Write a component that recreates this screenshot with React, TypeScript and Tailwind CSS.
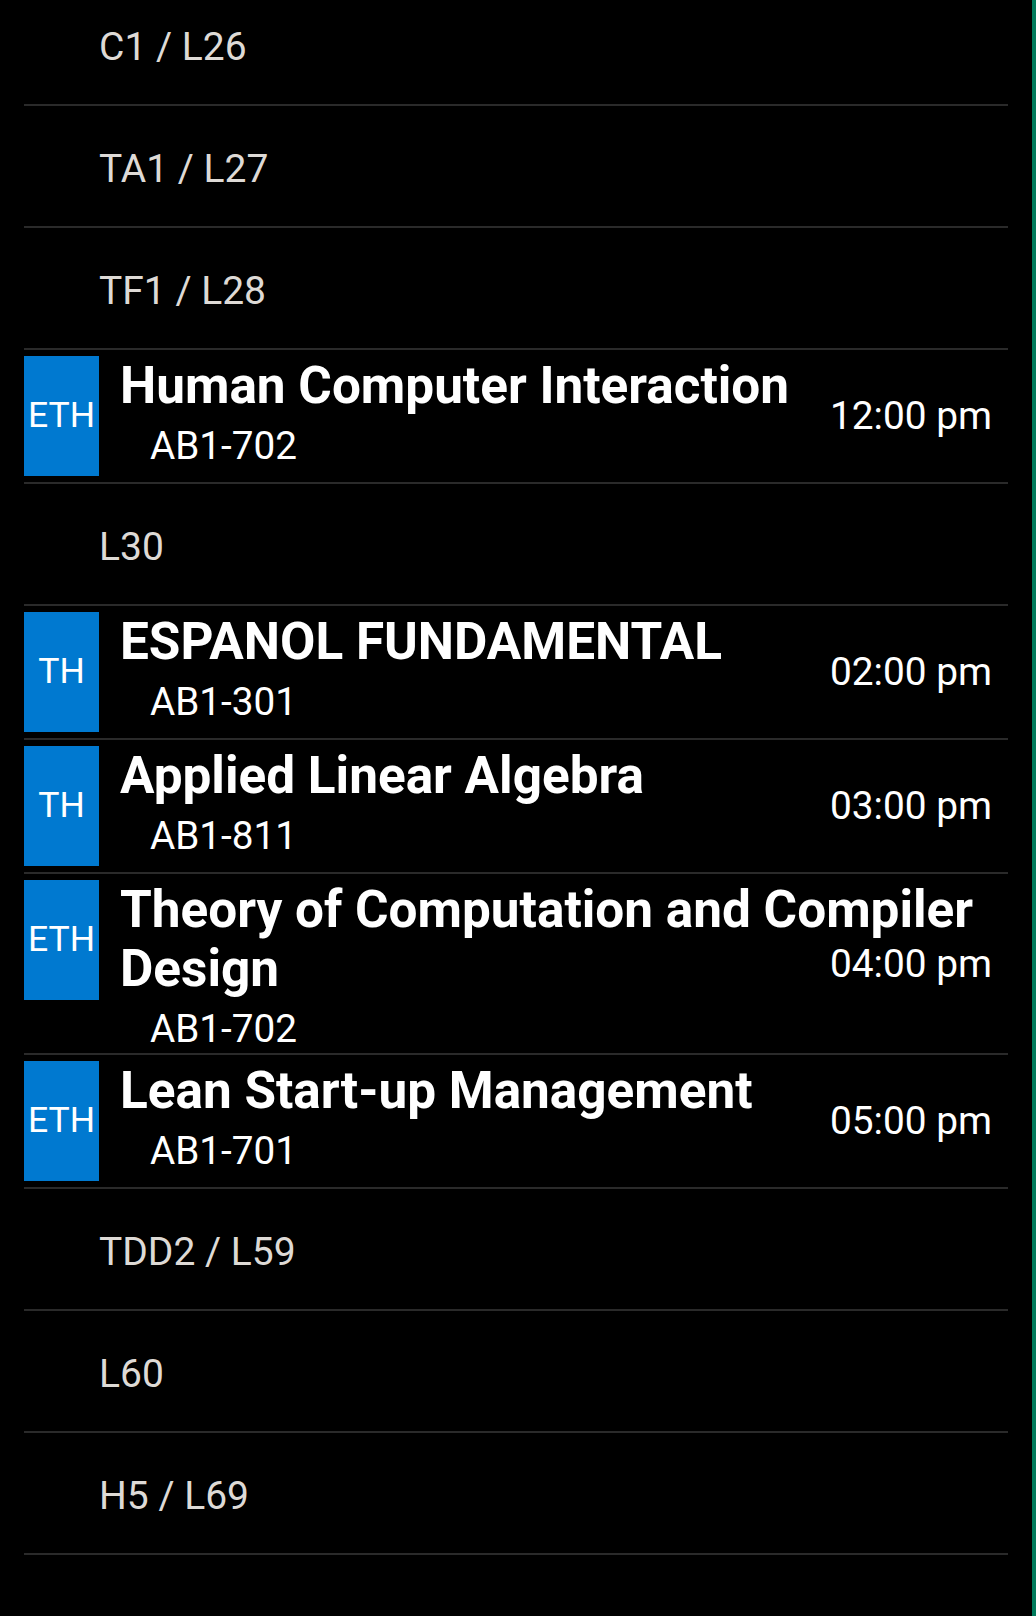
import React from 'react';

type Row =
  | { kind: 'free'; label: string }
  | { kind: 'class'; tag: string; title: string; room: string; time: string };

const rows: Row[] = [
  { kind: 'free', label: 'C1 / L26' },
  { kind: 'free', label: 'TA1 / L27' },
  { kind: 'free', label: 'TF1 / L28' },
  { kind: 'class', tag: 'ETH', title: 'Human Computer Interaction', room: 'AB1-702', time: '12:00 pm' },
  { kind: 'free', label: 'L30' },
  { kind: 'class', tag: 'TH', title: 'ESPANOL FUNDAMENTAL', room: 'AB1-301', time: '02:00 pm' },
  { kind: 'class', tag: 'TH', title: 'Applied Linear Algebra', room: 'AB1-811', time: '03:00 pm' },
  { kind: 'class', tag: 'ETH', title: 'Theory of Computation and Compiler Design', room: 'AB1-702', time: '04:00 pm' },
  { kind: 'class', tag: 'ETH', title: 'Lean Start-up Management', room: 'AB1-701', time: '05:00 pm' },
  { kind: 'free', label: 'TDD2 / L59' },
  { kind: 'free', label: 'L60' },
  { kind: 'free', label: 'H5 / L69' },
];

const App: React.FC = () => {
  return (
    <div
      className="relative w-[1036px] h-[1616px] overflow-hidden bg-black"
      style={{ fontFamily: 'Roboto, "Noto Sans", sans-serif' }}
    >
      <div className="ml-[24px] mr-[28px] -mt-[16px]">
        {rows.map((r, i) =>
          r.kind === 'free' ? (
            <div
              key={i}
              className="h-[122px] border-b-2 border-[#2a2a2a] flex items-center pl-[75px] pt-[6px] text-[39px] text-[#dedad6] leading-none"
            >
              {r.label}
            </div>
          ) : (
            <div key={i} className="relative flex items-start border-b-2 border-[#2a2a2a]">
              <div className="w-[75px] h-[120px] my-[6px] shrink-0 bg-[#0079d0] flex items-center justify-center text-white text-[35.5px]">
                {r.tag}
              </div>
              <div className="flex-1 pl-[21px] pr-[24px] pt-[6px] pb-[3px]">
                <div className="text-white font-bold text-[51.3px] leading-[59px]">{r.title}</div>
                <div className="mt-[10px] ml-[30px] text-white text-[38.7px] leading-[42px]">{r.room}</div>
              </div>
              <div className="absolute right-[16px] top-1/2 -translate-y-1/2 text-white text-[38.8px] leading-none whitespace-nowrap">
                {r.time}
              </div>
            </div>
          )
        )}
      </div>
      <div className="absolute right-0 top-0 h-[1616px] w-[4px] bg-[#007a5c]" />
    </div>
  );
};

export default App;
